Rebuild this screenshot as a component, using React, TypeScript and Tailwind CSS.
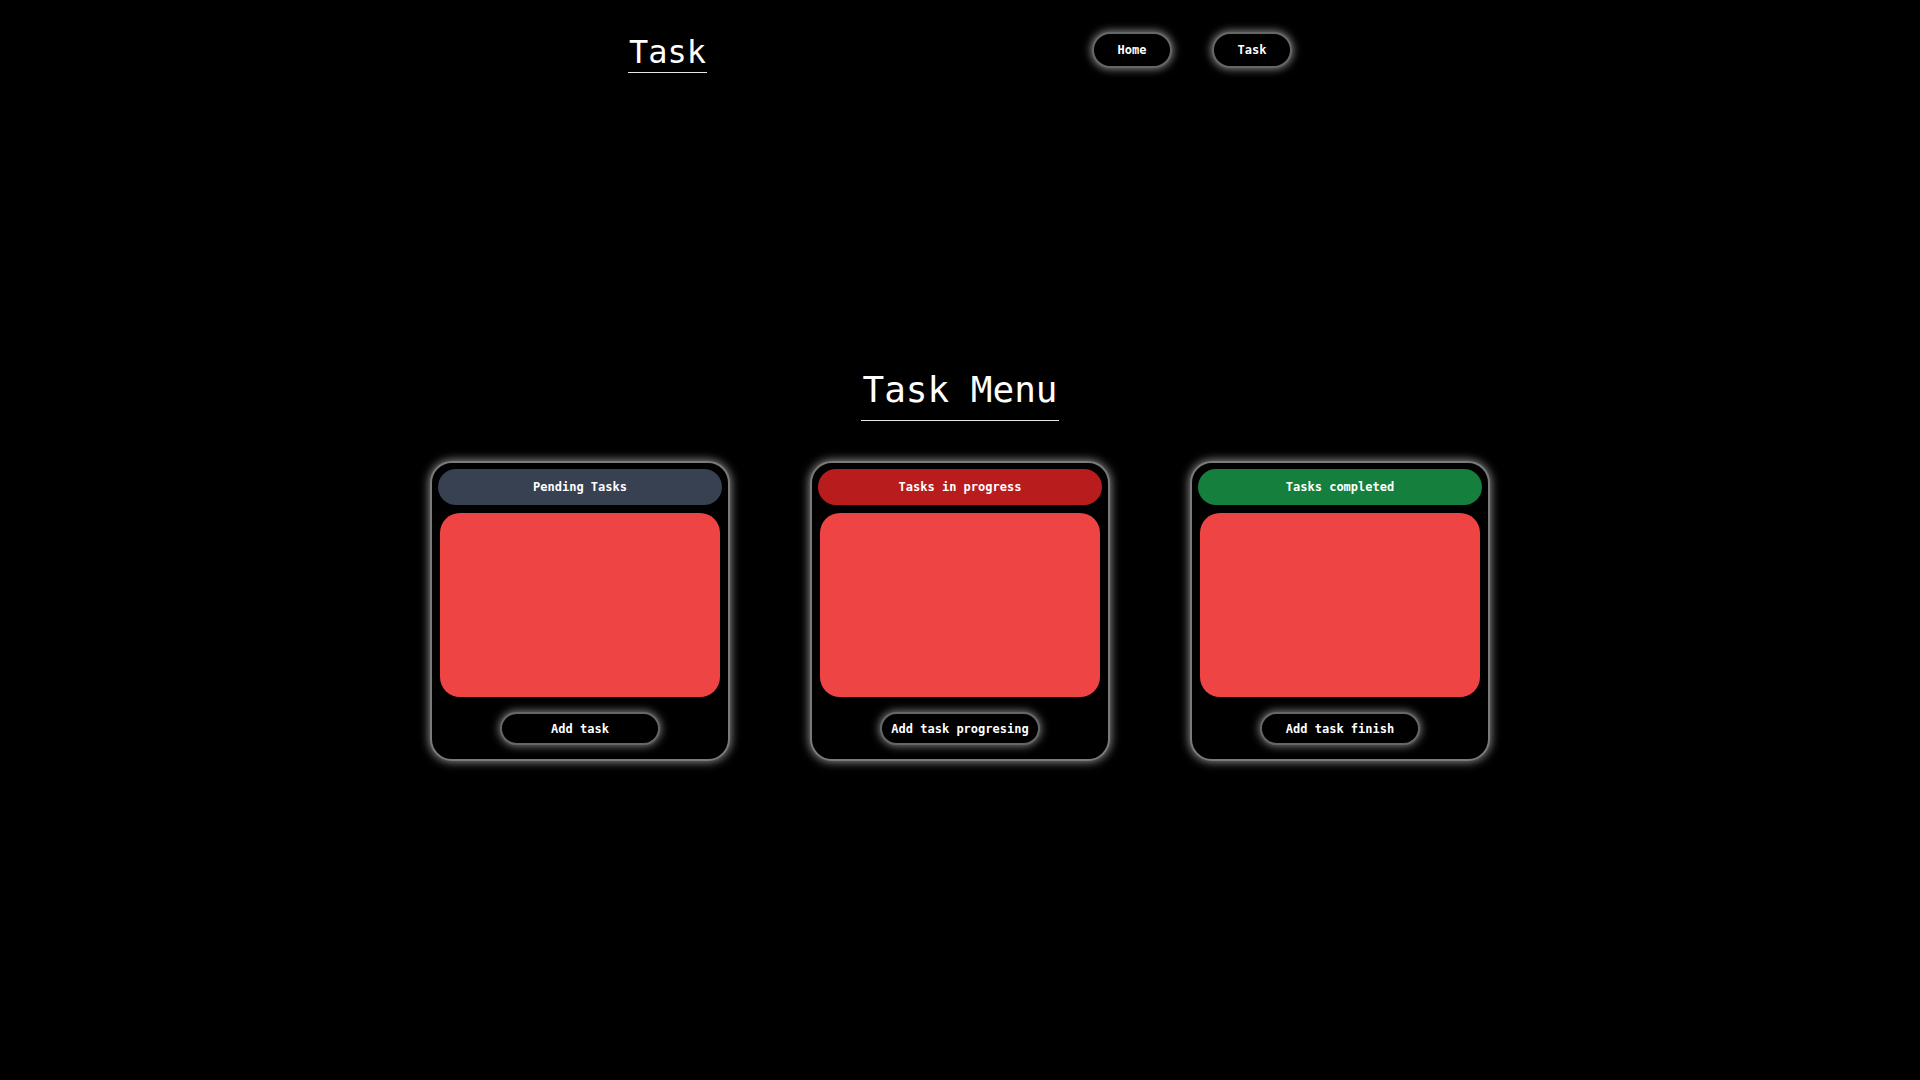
const columns = [
  { title: "Pending Tasks", head: "bg-[#374151]", action: "Add task" },
  { title: "Tasks in progress", head: "bg-[#b91c1c]", action: "Add task progresing" },
  { title: "Tasks completed", head: "bg-[#15803d]", action: "Add task finish" },
];

function NavButton({ label }: { label: string }) {
  return (
    <button className="w-20 h-9 rounded-full bg-black text-white text-[12px] font-bold border-2 border-[#666] shadow-[0_0_9px_1px_rgba(255,255,255,0.55)]">
      {label}
    </button>
  );
}

function TaskColumn({ title, head, action }: { title: string; head: string; action: string }) {
  return (
    <div className="w-[300px] h-[300px] rounded-[22px] border-2 border-[#7a7a7a] bg-black p-[6px] flex flex-col shadow-[0_0_10px_1px_rgba(255,255,255,0.55)]">
      <div className={`${head} h-9 rounded-[18px] flex items-center justify-center text-white text-[12px] font-bold`}>
        {title}
      </div>
      <div className="mx-[2px] mt-2 h-[184px] rounded-[20px] bg-[#ef4444]" />
      <div className="flex justify-center mt-[15px]">
        <button className="w-40 h-[33px] rounded-full bg-black text-white text-[12px] font-bold border-2 border-[#666] shadow-[0_0_8px_1px_rgba(255,255,255,0.5)]">
          {action}
        </button>
      </div>
    </div>
  );
}

export default function App() {
  return (
    <div className="min-h-screen bg-black text-white font-['DejaVu_Sans_Mono',monospace]">
      <header className="w-[664px] mx-auto pt-8 flex justify-between items-start">
        <h1 className="mt-1 text-[32px] leading-none pb-1 border-b border-gray-200 px-[1px]">Task</h1>
        <nav className="flex gap-10">
          <NavButton label="Home" />
          <NavButton label="Task" />
        </nav>
      </header>

      <main className="mt-[299px] flex flex-col items-center">
        <h2 className="text-[36px] leading-none pb-3 border-b border-gray-200 px-[1px]">Task Menu</h2>
        <div className="mt-10 flex gap-20">
          {columns.map((c) => (
            <TaskColumn key={c.title} {...c} />
          ))}
        </div>
      </main>
    </div>
  );
}
